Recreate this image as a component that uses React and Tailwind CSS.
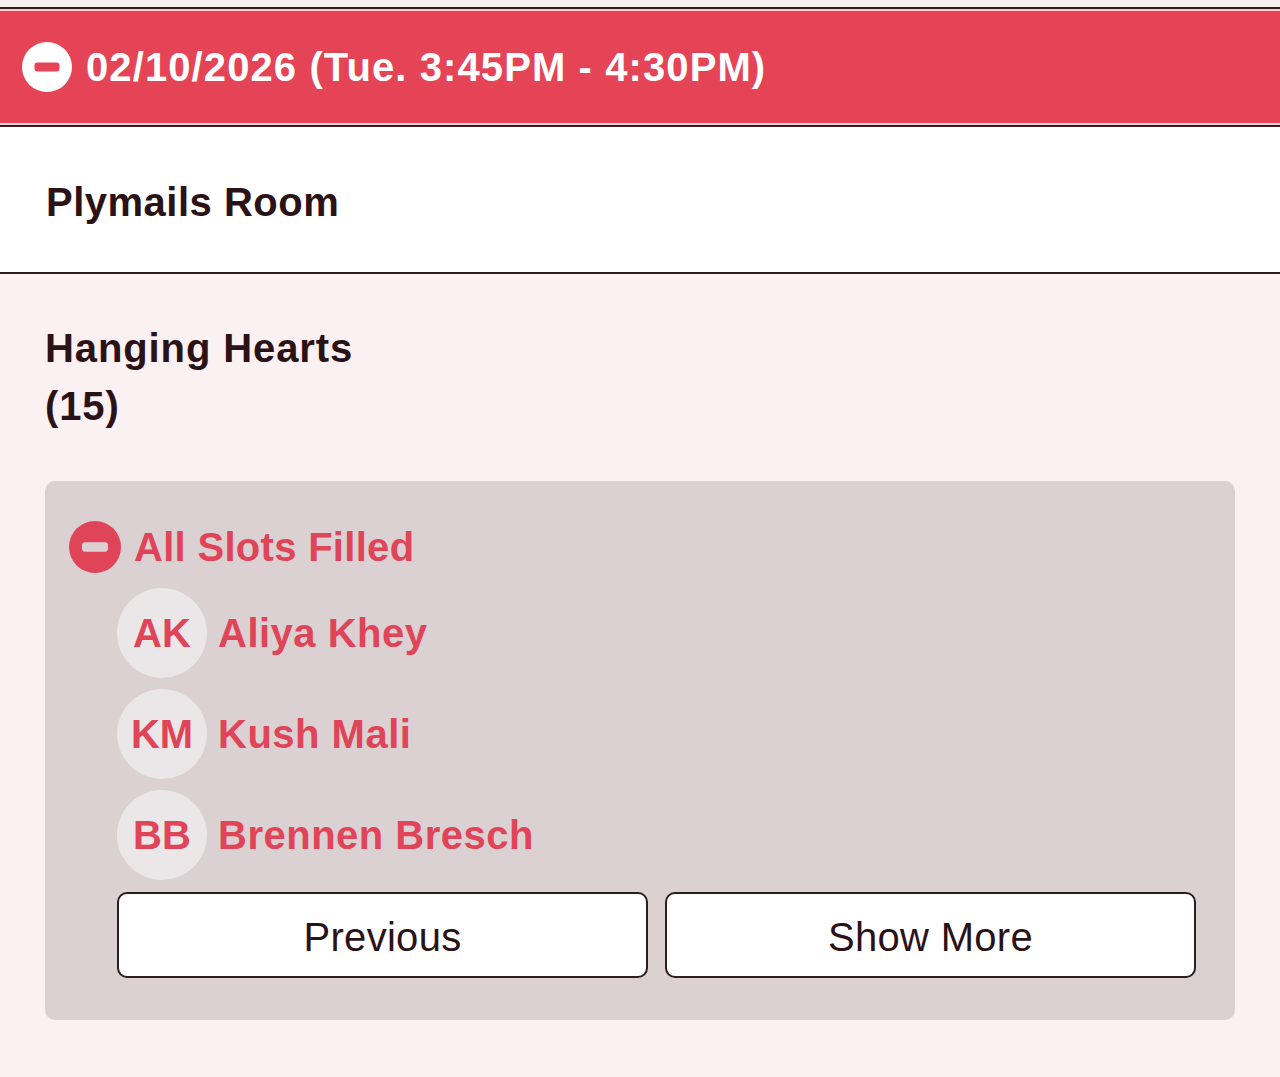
import React from 'react';

const people = [
  { initials: 'AK', name: 'Aliya Khey' },
  { initials: 'KM', name: 'Kush Mali' },
  { initials: 'BB', name: 'Brennen Bresch' },
];

const MinusCircle = ({ className, bar }) => (
  <svg viewBox="0 0 50 50" className={className}>
    <circle cx="25" cy="25" r="25" fill="currentColor" />
    <rect x="12.5" y="20.5" width="25" height="9" rx="3" fill={bar} />
  </svg>
);

const App = () => {
  return (
    <div
      className="min-h-[1077px] w-[1280px] bg-[#fbf0f2] text-[#2a1217]"
      style={{ fontFamily: '"Liberation Sans", Arial, Helvetica, sans-serif' }}
    >
      <div className="bg-[#f6f2f2] pt-[7px]">
        <div className="border-y-2 border-[#2d1c20] bg-[#f7cdd2] py-[2px]">
          <div className="flex h-[112px] items-center bg-[#e44455] pl-[22px] text-white">
            <MinusCircle className="h-[50px] w-[50px] text-white" bar="#e44455" />
            <h1 className="ml-[14px] text-[40px] font-bold tracking-[1.1px]">
              02/10/2026 (Tue. 3:45PM - 4:30PM)
            </h1>
          </div>
        </div>
      </div>

      <div className="flex h-[147px] items-center border-b-2 border-[#2d1c20] bg-white pl-[46px] pt-[4px]">
        <h2 className="text-[40px] font-bold tracking-[0.5px]">Plymails Room</h2>
      </div>

      <div className="px-[45px] pb-[58px] pt-[45px]">
        <h3 className="text-[40px] font-bold leading-[58px] tracking-[0.9px]">
          Hanging Hearts
          <br />
          (15)
        </h3>

        <div className="mt-[46px] rounded-[10px] bg-[#dbd0d2] pb-[42px] pl-[24px] pr-[39px] pt-[40px]">
          <div className="flex h-[52px] items-center text-[#e04458]">
            <MinusCircle className="h-[52px] w-[52px] text-[#e04458]" bar="#dbd0d2" />
            <span className="ml-[13px] text-[40px] font-bold leading-none tracking-[0.3px]">
              All Slots Filled
            </span>
          </div>

          <div className="pl-[48px]">
            <ul className="mt-[15px] flex flex-col gap-[11px]">
              {people.map((p) => (
                <li key={p.initials} className="flex h-[90px] items-center text-[#e04458]">
                  <div className="flex h-[90px] w-[90px] items-center justify-center rounded-full bg-[#ebe6e7] text-[40px] font-bold leading-none">
                    {p.initials}
                  </div>
                  <span className="ml-[11px] text-[40px] font-bold leading-none tracking-[0.5px]">
                    {p.name}
                  </span>
                </li>
              ))}
            </ul>

            <div className="mt-[12px] grid grid-cols-2 gap-[17px]">
              <button className="h-[86px] rounded-[10px] border-2 border-[#2d1c20] bg-white pt-[4px] text-[40px] tracking-[0.3px] text-[#2a1217]">
                Previous
              </button>
              <button className="h-[86px] rounded-[10px] border-2 border-[#2d1c20] bg-white pt-[4px] text-[40px] tracking-[0.3px] text-[#2a1217]">
                Show More
              </button>
            </div>
          </div>
        </div>
      </div>
    </div>
  );
};

export default App;
